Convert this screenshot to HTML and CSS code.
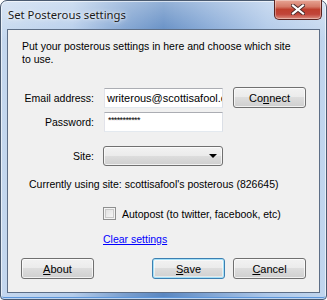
FILE: index.html
```html
<!DOCTYPE html>
<html lang="en">
<head>
  <meta charset="UTF-8" />
  <title>Set Posterous settings</title>
  <link rel="stylesheet" href="styles.css">
</head>
<body>
  <div class="window">
    <div class="titlebar">
      <span class="title">Set Posterous settings</span>
      <button class="close" type="button" aria-label="Close">
        <svg width="14" height="11" viewBox="0 0 14 11">
          <path d="M2 1.5 L12 9.5 M12 1.5 L2 9.5" stroke="#4a2a2a" stroke-width="4" stroke-linecap="square" />
          <path d="M2 1.5 L12 9.5 M12 1.5 L2 9.5" stroke="#ffffff" stroke-width="2.2" stroke-linecap="square" />
        </svg>
      </button>
    </div>

    <div class="client">
      <p class="intro">Put your posterous settings in here and choose which site<br>to use.</p>

      <div class="fields">
        <label class="lbl" for="email">Email address:</label>
        <div class="textbox"><span class="caret"></span>writerous@scottisafool.c</div>
        <button class="btn" type="button">Co<u>n</u>nect</button>

        <label class="lbl" for="pass">Password:</label>
        <div class="textbox pw">***********</div>
        <span></span>
      </div>

      <div class="site-row">
        <label class="lbl">Site:</label>
        <div class="combo"><span class="arrow"></span></div>
      </div>

      <p class="current">Currently using site: scottisafool's posterous (826645)</p>

      <div class="check-row">
        <span class="checkbox"></span>
        <span>Autopost (to twitter, facebook, etc)</span>
      </div>

      <div class="link-row"><a href="#">Clear settings</a></div>

      <div class="buttons">
        <button class="btn" type="button"><u>A</u>bout</button>
        <div class="right">
          <button class="btn default" type="button"><u>S</u>ave</button>
          <button class="btn" type="button"><u>C</u>ancel</button>
        </div>
      </div>
    </div>
  </div>
</body>
</html>
```

FILE: styles.css
```css
body {
  margin: 0;
  background: #ffffff;
}

.window {
  width: 327px;
  height: 300px;
  box-sizing: border-box;
  border: 1px solid #4a5a70;
  border-radius: 7px 7px 4px 4px;
  background:
    linear-gradient(to bottom, rgba(255,255,255,0.35), rgba(255,255,255,0) 40px),
    linear-gradient(to right, #c4d7ee 0%, #b4ccea 22%, #7a9fcf 38%, #5a87c1 50%, #7fa4d4 64%, #adc7e8 82%, #c2d6ee 100%);
  box-shadow: inset 0 0 0 1px rgba(255,255,255,0.6), inset 0 -2px 0 #5b95da;
  font-family: "Liberation Sans", Arial, sans-serif;
  font-size: 10.5px;
  color: #000;
}

.titlebar {
  height: 28px;
  display: flex;
  justify-content: space-between;
  align-items: flex-start;
  padding: 0 4px 0 7px;
}

.title {
  font-family: "Noto Sans", "Open Sans", sans-serif;
  font-size: 11.3px;
  line-height: 16px;
  margin-top: 6px;
  color: #1a1a1a;
  text-shadow: 0 0 6px rgba(255,255,255,0.9), 0 0 3px rgba(255,255,255,0.8);
}

.close {
  width: 48px;
  height: 20px;
  margin-top: -1px;
  padding: 0;
  border: 1px solid #5a2320;
  border-top: none;
  border-radius: 0 0 5px 5px;
  background: linear-gradient(to bottom, #e7a595 0%, #d57a68 35%, #bf3f2e 50%, #c1453a 75%, #dc8e80 100%);
  box-shadow: inset 0 0 0 1px rgba(255,255,255,0.35);
  display: flex;
  align-items: center;
  justify-content: center;
}

.client {
  margin: 0 6px 0 6px;
  height: 264px;
  box-sizing: border-box;
  border: 1px solid #5d6e86;
  background: #f0f0f0;
  padding-top: 10px;
}

.intro {
  margin: 0 0 0 14px;
  line-height: 13px;
}

.fields {
  display: grid;
  grid-template-columns: 86px 119px 73px;
  column-gap: 10px;
  row-gap: 4px;
  align-items: center;
  margin-top: 21px;
}

.lbl {
  text-align: right;
  white-space: nowrap;
}

.textbox {
  height: 20px;
  box-sizing: border-box;
  border: 1px solid #abadb3;
  border-color: #abadb3 #dbdfe6 #e3e9ef #e2e3ea;
  background: #fff;
  padding: 3px 0 0 3px;
  white-space: nowrap;
  overflow: hidden;
  line-height: 13px;
  display: flex;
  font-size: 11px;
}

.caret {
  width: 1px;
  height: 13px;
  background: #000;
  margin-right: -1px;
}

.textbox.pw {
  font-size: 9px;
  letter-spacing: -0.6px;
  padding-top: 1px;
}

.btn {
  height: 21px;
  width: 73px;
  padding: 0;
  box-sizing: border-box;
  border: 1px solid #707070;
  border-radius: 3px;
  background: linear-gradient(to bottom, #f2f2f2 0%, #ebebeb 49%, #dddddd 50%, #cfcfcf 100%);
  box-shadow: inset 0 0 0 1px rgba(255,255,255,0.7);
  font-family: "Liberation Sans", Arial, sans-serif;
  font-size: 11px;
  color: #000;
}

.btn.default {
  border-color: #3c7fb1;
  box-shadow: inset 0 0 0 1px #a6e1f8, inset 0 0 0 2px rgba(255,255,255,0.5);
}

.site-row {
  display: flex;
  align-items: center;
  gap: 9px;
  margin-top: 14px;
}

.site-row .lbl {
  width: 86px;
}

.combo {
  width: 120px;
  height: 20px;
  box-sizing: border-box;
  border: 1px solid #707070;
  border-radius: 3px;
  background: linear-gradient(to bottom, #f2f2f2 0%, #ebebeb 49%, #dddddd 50%, #cfcfcf 100%);
  box-shadow: inset 0 0 0 1px rgba(255,255,255,0.7);
  display: flex;
  align-items: center;
  justify-content: flex-end;
  padding-right: 5px;
}

.arrow {
  width: 0;
  height: 0;
  border-left: 4px solid transparent;
  border-right: 4px solid transparent;
  border-top: 4px solid #000;
}

.current {
  margin: 12px 0 0 21px;
  line-height: 13px;
}

.check-row {
  display: flex;
  align-items: center;
  gap: 6px;
  margin: 16px 0 0 95px;
  height: 13px;
}

.checkbox {
  width: 13px;
  height: 13px;
  box-sizing: border-box;
  border: 1px solid #8e8f8f;
  background: linear-gradient(135deg, #dcdcdc, #fbfbfb);
  box-shadow: inset 0 0 0 1px #f4f4f4, inset 0 0 0 2px #c9c9c9;
}

.link-row {
  margin: 13px 0 0 95px;
  line-height: 13px;
}

.link-row a {
  color: #0000ff;
  text-decoration: underline;
}

.buttons {
  display: flex;
  justify-content: space-between;
  margin: 12px 13px 0 13px;
}

.buttons .right {
  display: flex;
  gap: 8px;
}
```
